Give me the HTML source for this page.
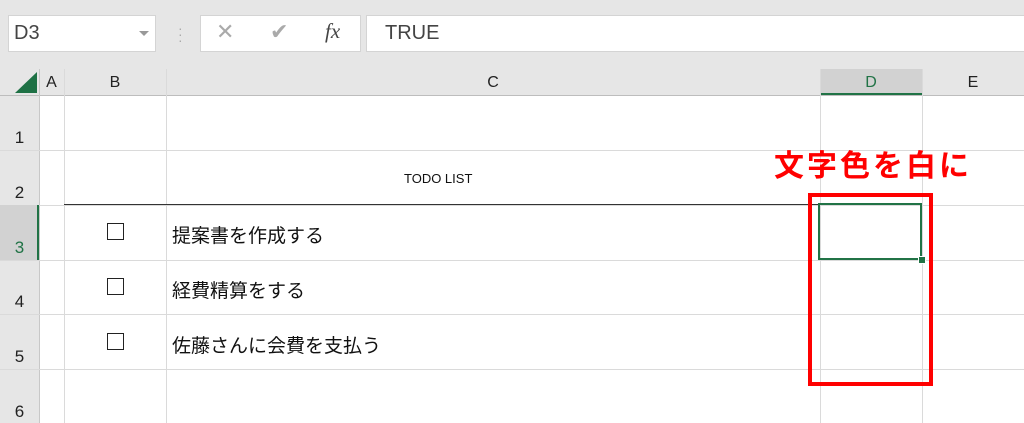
<!DOCTYPE html>
<html><head><meta charset="utf-8"><style>
body{margin:0;width:1024px;height:423px;overflow:hidden;background:#fff;font-family:"Liberation Sans","Noto Sans CJK JP",sans-serif;position:relative}
.a{position:absolute}
.vl{position:absolute;width:1px;background:#dadada}
.hl{position:absolute;height:1px;background:#dadada}
.ch{position:absolute;top:69px;height:26px;line-height:28px;text-align:center;font-size:16px;color:#222}
.rh{position:absolute;left:0;width:39px;text-align:center;font-size:17px;color:#222}
.cb{position:absolute;left:107px;width:17px;height:17px;border:1.5px solid #222;box-sizing:border-box}
.tx{position:absolute;left:172px;font-size:19px;color:#111}
</style></head><body>
<div class="a" style="left:0;top:0;width:1024px;height:95px;background:#e6e6e6"></div>
<div class="a" style="left:0;top:95px;width:39px;height:328px;background:#e6e6e6"></div>
<div class="a" style="left:8px;top:15px;width:148px;height:37px;background:#fff;border:1px solid #d4d4d4;box-sizing:border-box"></div>
<div class="a" style="left:14px;top:22px;font-size:20px;color:#444">D3</div>
<div class="a" style="left:139px;top:31px;width:0;height:0;border-left:5px solid transparent;border-right:5px solid transparent;border-top:5px solid #999"></div>
<div class="a" style="left:178px;top:25px;color:#aaa;font-size:14px;line-height:6px">·<br>·<br>·</div>
<div class="a" style="left:200px;top:15px;width:161px;height:37px;background:#fff;border:1px solid #d4d4d4;box-sizing:border-box"></div>
<div class="a" style="left:216px;top:19px;font-size:22px;color:#aaa">✕</div>
<div class="a" style="left:270px;top:19px;font-size:22px;color:#aaa">✔</div>
<div class="a" style="left:325px;top:19px;font-size:21px;color:#444;font-style:italic;font-family:'Liberation Serif',serif">fx</div>
<div class="a" style="left:366px;top:15px;width:660px;height:37px;background:#fff;border:1px solid #d4d4d4;box-sizing:border-box"></div>
<div class="a" style="left:385px;top:22px;font-size:20px;color:#444">TRUE</div>
<div class="a" style="left:15px;top:72px;width:0;height:0;border-left:22px solid transparent;border-bottom:21px solid #1e7145"></div>
<div class="a" style="left:820px;top:69px;width:102px;height:26px;background:#d2d2d2;border-bottom:2px solid #217346;box-sizing:border-box"></div>
<div class="a" style="left:0;top:95px;width:1024px;height:1px;background:#bdbdbd"></div>
<div class="ch" style="left:39px;width:25px">A</div>
<div class="ch" style="left:64px;width:102px">B</div>
<div class="ch" style="left:166px;width:654px">C</div>
<div class="ch" style="left:820px;width:102px;color:#217346">D</div>
<div class="ch" style="left:922px;width:102px">E</div>
<div class="a" style="left:39px;top:69px;width:1px;height:354px;background:#c8c8c8"></div>
<div class="vl" style="left:64px;top:69px;height:354px"></div>
<div class="vl" style="left:166px;top:69px;height:354px"></div>
<div class="vl" style="left:820px;top:69px;height:354px"></div>
<div class="vl" style="left:922px;top:69px;height:354px"></div>
<div class="hl" style="left:0;top:150px;width:1024px"></div>
<div class="hl" style="left:0;top:205px;width:1024px"></div>
<div class="hl" style="left:0;top:260px;width:1024px"></div>
<div class="hl" style="left:0;top:314px;width:1024px"></div>
<div class="hl" style="left:0;top:369px;width:1024px"></div>
<div class="a" style="left:0;top:205px;width:39px;height:55px;background:#d2d2d2;border-right:2px solid #217346;box-sizing:border-box"></div>
<div class="rh" style="top:128px">1</div>
<div class="rh" style="top:183px">2</div>
<div class="rh" style="top:238px;color:#217346">3</div>
<div class="rh" style="top:292px">4</div>
<div class="rh" style="top:347px">5</div>
<div class="rh" style="top:402px">6</div>
<div class="a" style="left:64px;top:204px;width:756px;height:1px;background:#333"></div>
<div class="a" style="left:404px;top:171px;font-size:13px;color:#111">TODO LIST</div>
<div class="cb" style="top:223px"></div>
<div class="cb" style="top:278px"></div>
<div class="cb" style="top:333px"></div>
<div class="tx" style="top:221px">提案書を作成する</div>
<div class="tx" style="top:276px">経費精算をする</div>
<div class="tx" style="top:331px">佐藤さんに会費を支払う</div>
<div class="a" style="left:818px;top:203px;width:104px;height:57px;border:2px solid #217346;box-sizing:border-box"></div>
<div class="a" style="left:918px;top:256px;width:6px;height:6px;background:#217346;border:1px solid #fff"></div>
<div class="a" style="left:808px;top:193px;width:125px;height:193px;border:4px solid #f00;box-sizing:border-box"></div>
<div class="a" style="left:774px;top:141px;font-size:30px;font-weight:bold;color:#f00;letter-spacing:3px;white-space:nowrap">文字色を白に</div>
</body></html>
